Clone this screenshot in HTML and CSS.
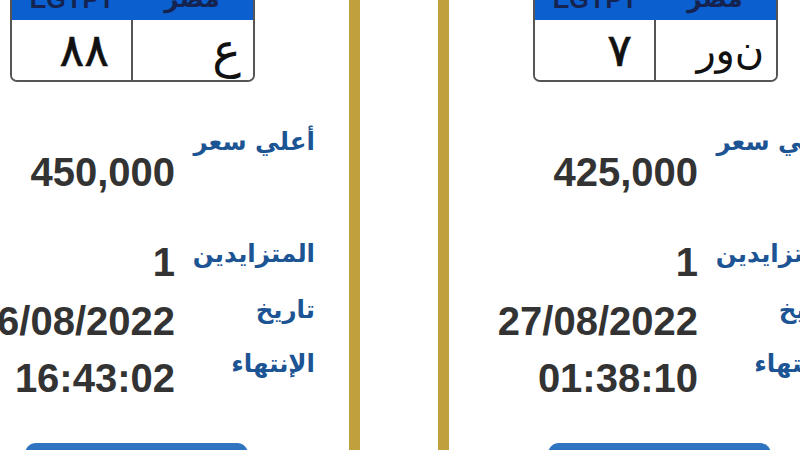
FILE: index.html
```html
<!DOCTYPE html>
<html lang="ar">
<head>
<meta charset="utf-8">
<title>لوحات</title>
<link rel="stylesheet" href="styles.css">
</head>
<body>
<div class="board">
  <div class="card">
    <div class="plate">
      <div class="plate-head">
        <div class="ph-cell">EGYPT</div>
        <div class="ph-cell ar" dir="rtl">مصر</div>
      </div>
      <div class="plate-body">
        <div class="pb-cell num" dir="rtl">٨٨</div>
        <div class="pb-div"></div>
        <div class="pb-cell let" dir="rtl">ع</div>
      </div>
    </div>
    <div class="row row-price">
      <div class="val val-price">450,000</div>
      <div class="lbl lbl-price" dir="rtl">أعلي سعر</div>
    </div>
    <div class="row row-bid">
      <div class="val">1</div>
      <div class="lbl lbl-bid" dir="rtl">المتزايدين</div>
    </div>
    <div class="row row-end">
      <div class="val val-end">26/08/2022<br>16:43:02</div>
      <div class="lbl lbl-end" dir="rtl">تاريخ<br>الإنتهاء</div>
    </div>
    <div class="btn"></div>
  </div>
  <div class="card">
    <div class="plate">
      <div class="plate-head">
        <div class="ph-cell">EGYPT</div>
        <div class="ph-cell ar" dir="rtl">مصر</div>
      </div>
      <div class="plate-body">
        <div class="pb-cell num" dir="rtl">٧</div>
        <div class="pb-div"></div>
        <div class="pb-cell let spaced" dir="rtl">ن و ر</div>
      </div>
    </div>
    <div class="row row-price">
      <div class="val val-price">425,000</div>
      <div class="lbl lbl-price" dir="rtl">أعلي سعر</div>
    </div>
    <div class="row row-bid">
      <div class="val">1</div>
      <div class="lbl lbl-bid" dir="rtl">المتزايدين</div>
    </div>
    <div class="row row-end">
      <div class="val val-end">27/08/2022<br>01:38:10</div>
      <div class="lbl lbl-end" dir="rtl">تاريخ<br>الإنتهاء</div>
    </div>
    <div class="btn"></div>
  </div>
</div>
</body>
</html>
```

FILE: styles.css
```css
html, body {
  margin: 0;
  padding: 0;
  background: #ffffff;
  overflow: hidden;
  width: 800px;
  height: 450px;
}

.board {
  display: flex;
  gap: 78px;
  margin-left: -85px;
  height: 450px;
}

.card {
  flex: none;
  width: 423px;
  height: 450px;
  border-left: 11px solid #c0a03c;
  border-right: 11px solid #c0a03c;
  background: #ffffff;
  display: flex;
  flex-direction: column;
}

.plate {
  box-sizing: border-box;
  width: 245px;
  margin-top: -14px;
  margin-left: 84px;
  border: 2px solid #555555;
  border-radius: 0 0 7px 7px;
  overflow: hidden;
  flex: none;
}

.plate-head {
  display: flex;
  height: 32px;
  background: #0c5fcf;
}

.ph-cell {
  width: 120px;
  text-align: center;
  font-family: "Liberation Sans", "DejaVu Sans", sans-serif;
  font-weight: bold;
  font-size: 25px;
  line-height: 22px;
  color: #142350;
}

.ph-cell.ar {
  font-family: "DejaVu Sans", sans-serif;
}

.plate-body {
  display: flex;
  height: 60px;
  background: #ffffff;
}

.pb-cell {
  font-family: "DejaVu Sans", sans-serif;
  font-size: 48px;
  line-height: 60px;
  color: #111111;
  text-align: right;
  box-sizing: border-box;
  white-space: nowrap;
}

.pb-cell.num {
  width: 119px;
  padding-right: 22px;
  font-size: 46px;
  -webkit-text-stroke: 0.6px #111111;
}

.pb-cell.let {
  width: 120px;
  padding-right: 12px;
}

.pb-cell.spaced {
  font-size: 40px;
  word-spacing: -13px;
}

.pb-div {
  width: 2px;
  background: #555555;
}

.row {
  display: flex;
  align-items: flex-start;
  gap: 20px;
  flex: none;
}

.val {
  width: 249px;
  text-align: right;
  font-family: "Liberation Sans", Arial, sans-serif;
  font-weight: bold;
  font-size: 40px;
  line-height: 46px;
  color: #333333;
}

.lbl {
  width: 120px;
  text-align: right;
  white-space: nowrap;
  font-family: "DejaVu Sans", sans-serif;
  font-weight: bold;
  font-size: 24.5px;
  line-height: 30px;
  color: #1c5494;
}

.row-price {
  margin-top: 45px;
}

.val-price {
  padding-top: 22px;
}

.row-bid {
  margin-top: 44px;
}

.row-end {
  margin-top: -2px;
}

.val-end {
  line-height: 57px;
  padding-top: 10px;
}

.lbl-end {
  line-height: 54px;
}

.btn {
  flex: none;
  width: 223px;
  height: 44px;
  margin-top: 36px;
  margin-left: 99px;
  background: #2f74c0;
  border-radius: 11px;
}
```
